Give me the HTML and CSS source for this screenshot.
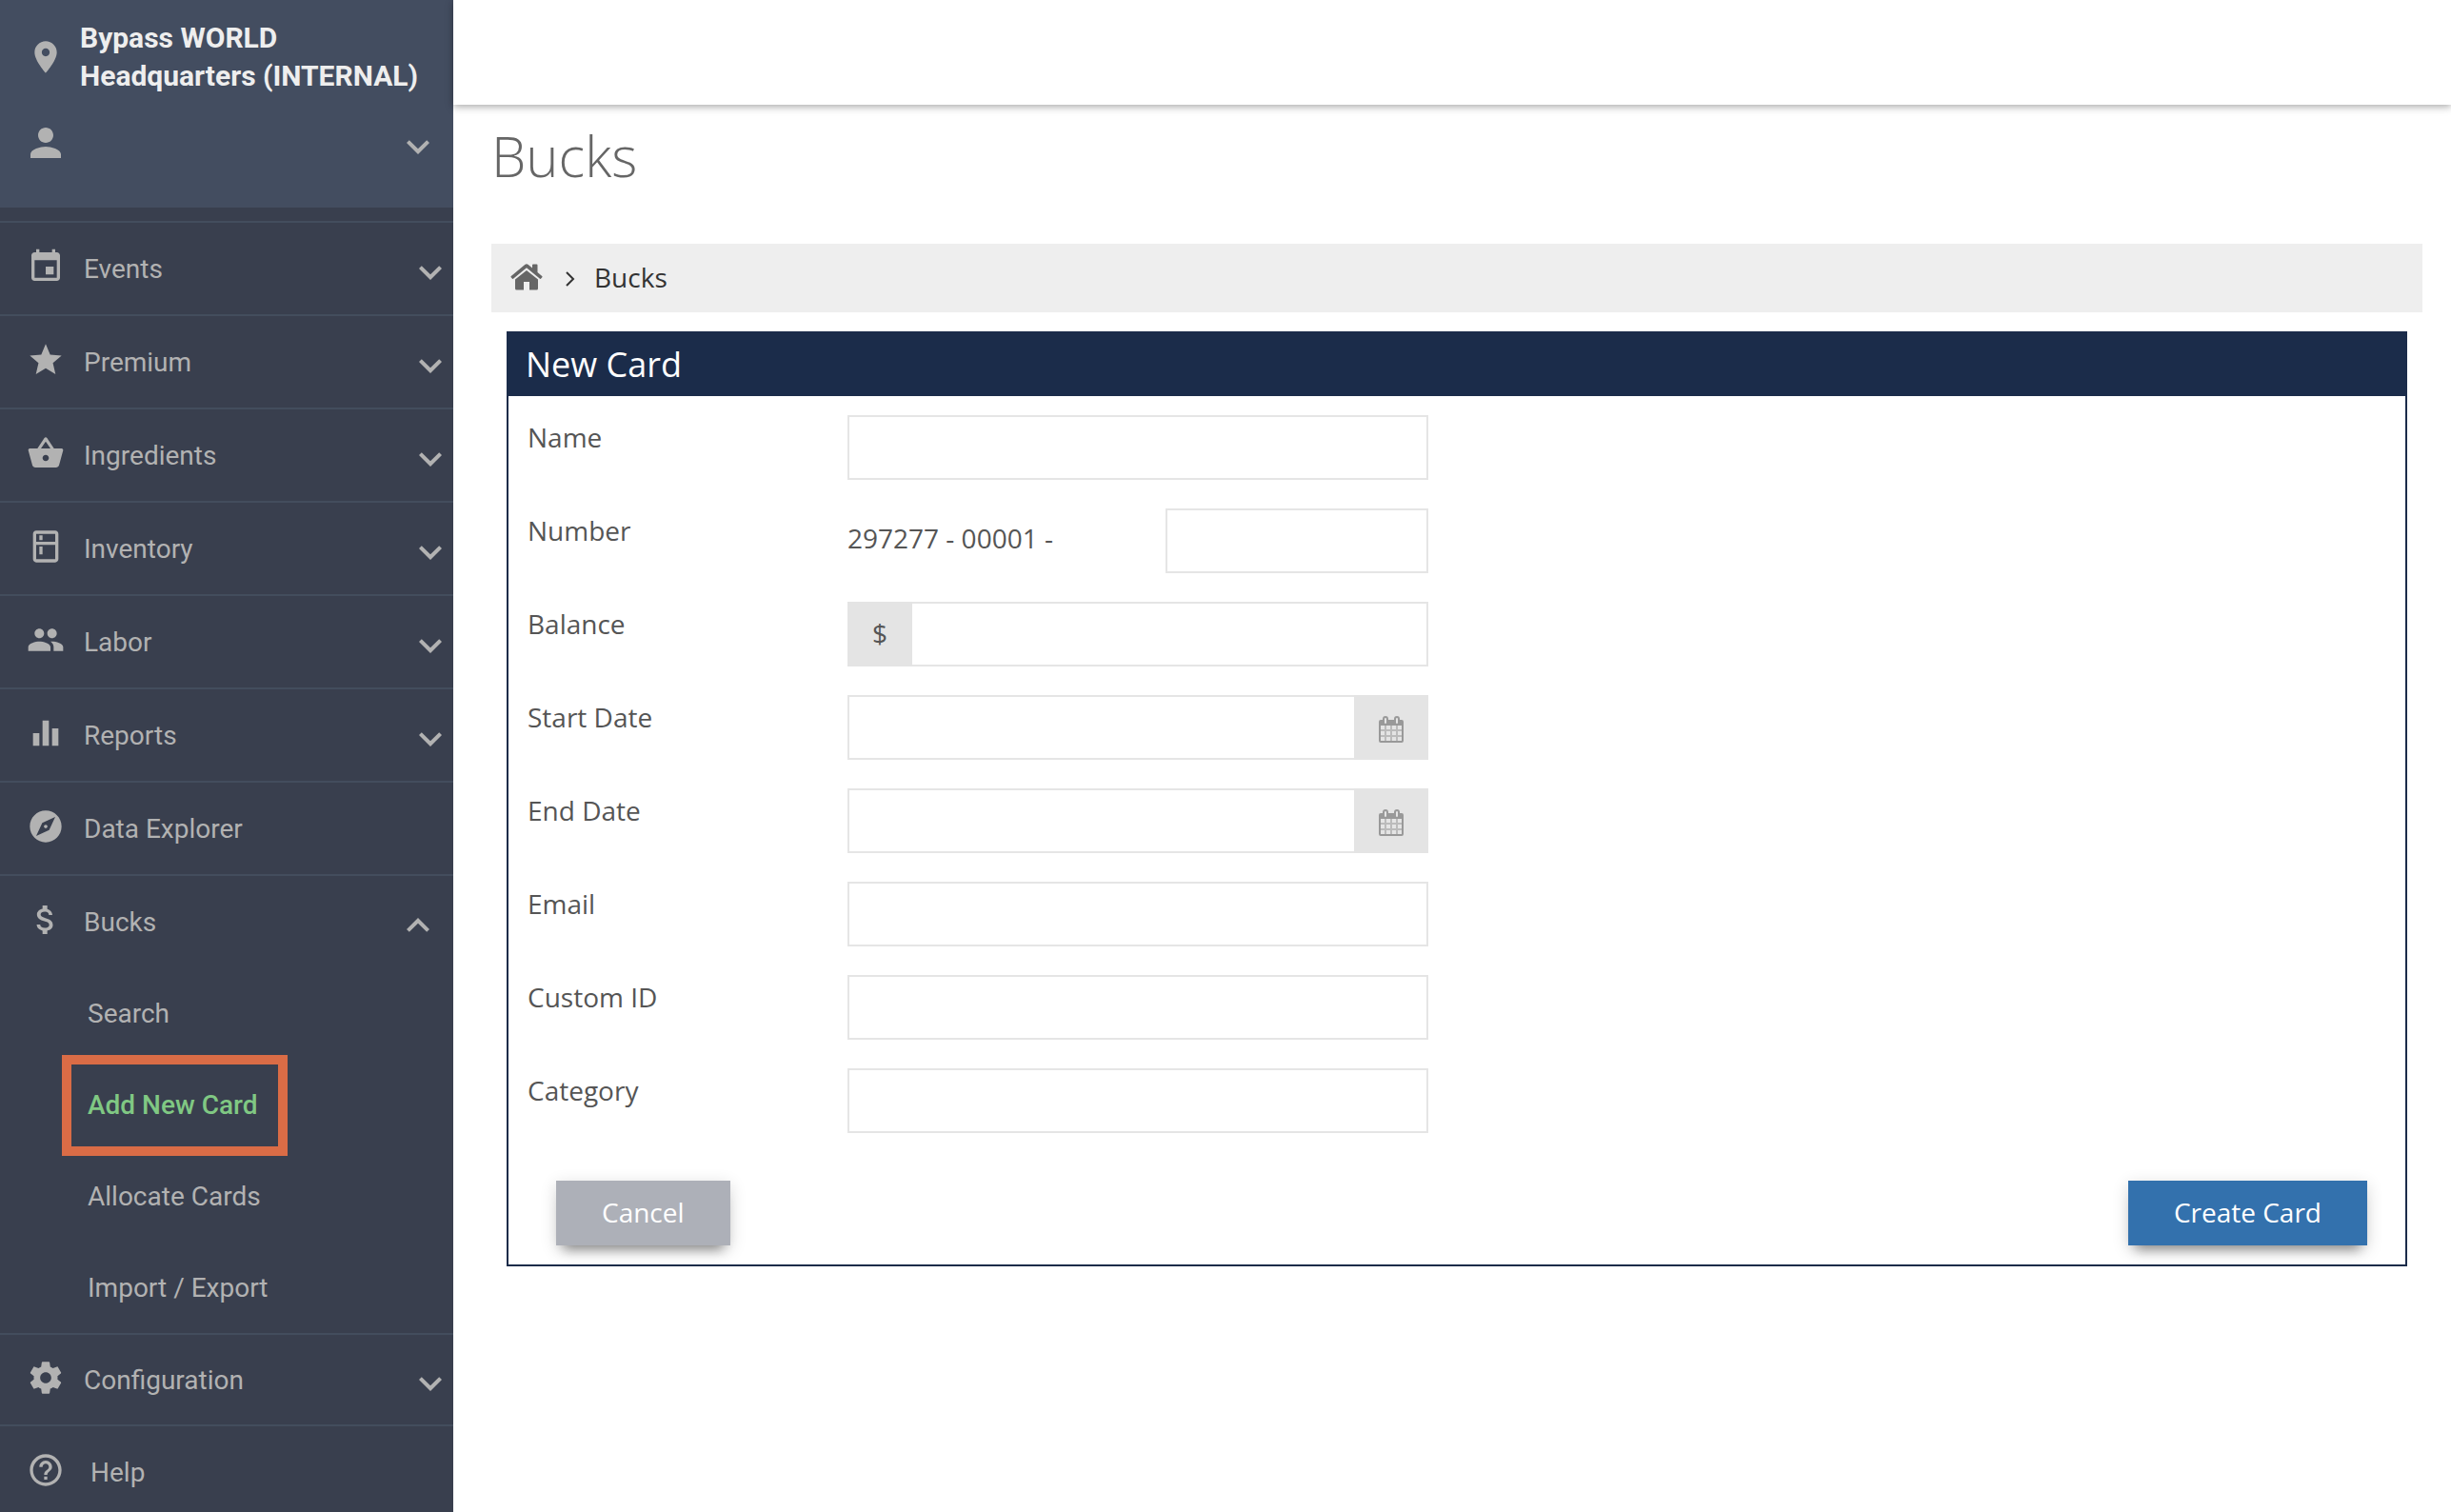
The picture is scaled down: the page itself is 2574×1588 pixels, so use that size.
FILE: index.html
```html
<!DOCTYPE html>
<html lang="en">
<head>
    <meta charset="UTF-8" />
    <meta name="viewport" content="width=device-width, initial-scale=1.0"/>
    <title>Bucks - New Card</title>
    <link rel="stylesheet" href="styles.css">
</head>
<body>
    <!-- Shared icons -->
    <svg class="icon-defs" aria-hidden="true">
        <symbol id="chevron-down" viewBox="0 0 24 24"><path d="M7.41 8.59L12 13.17l4.59-4.58L18 10l-6 6-6-6 1.41-1.41z"/></symbol>
        <symbol id="chevron-up" viewBox="0 0 24 24"><path d="M7.41 15.41L12 10.83l4.59 4.58L18 14l-6-6-6 6z"/></symbol>
        <symbol id="calendar" viewBox="0 0 26 28">
            <path fill-rule="evenodd" d="M2 4h2V3a3 3 0 0 1 6 0v1h6V3a3 3 0 0 1 6 0v1h2a2 2 0 0 1 2 2v20a2 2 0 0 1-2 2H2a2 2 0 0 1-2-2V6a2 2 0 0 1 2-2zM2 10v16h22V10zM6 3v4a1 1 0 0 0 2 0V3a1 1 0 0 0-2 0zM18 3v4a1 1 0 0 0 2 0V3a1 1 0 0 0-2 0z"/>
            <path opacity=".55" d="M6 10h2v16H6zM12 10h2v16h-2zM18 10h2v16h-2zM2 14h22v2H2zM2 20h22v2H2z"/>
        </symbol>
    </svg>

    <aside class="sidebar">
        <div class="account">
            <div class="account-row">
                <svg class="icon" viewBox="0 0 24 24"><path d="M12 2C8.13 2 5 5.13 5 9c0 5.25 7 13 7 13s7-7.75 7-13c0-3.87-3.13-7-7-7zm0 9.5c-1.38 0-2.5-1.12-2.5-2.5s1.12-2.5 2.5-2.5 2.5 1.12 2.5 2.5-1.12 2.5-2.5 2.5z"/></svg>
                <div class="venue">Bypass WORLD<br>Headquarters (INTERNAL)</div>
            </div>
            <button type="button" class="user-menu" aria-label="User menu">
                <svg class="icon-lg" viewBox="0 0 24 24"><path d="M12 12c2.21 0 4-1.79 4-4s-1.79-4-4-4-4 1.79-4 4 1.79 4 4 4zm0 2c-2.67 0-8 1.34-8 4v2h16v-2c0-2.66-5.33-4-8-4z"/></svg>
                <svg class="chevron inset"><use href="#chevron-down"/></svg>
            </button>
        </div>

        <nav class="nav">
            <a class="nav-item" href="#">
                <svg class="icon" viewBox="0 0 24 24"><path d="M17 12h-5v5h5v-5zM16 1v2H8V1H6v2H5c-1.11 0-1.99.9-1.99 2L3 19c0 1.1.89 2 2 2h14c1.1 0 2-.9 2-2V5c0-1.100-.9-2-2-2h-1V1h-2zm3 18H5V8h14v11z"/></svg>
                <span>Events</span>
                <svg class="chevron"><use href="#chevron-down"/></svg>
            </a>
            <a class="nav-item" href="#">
                <svg class="icon" viewBox="0 0 24 24"><path d="M12 17.27L18.18 21l-1.640-7.030L22 9.240l-7.190-.61L12 2 9.190 8.630 2 9.240l5.460 4.730L5.820 21z"/></svg>
                <span>Premium</span>
                <svg class="chevron"><use href="#chevron-down"/></svg>
            </a>
            <a class="nav-item" href="#">
                <svg class="icon" viewBox="0 0 24 24"><path d="M17.210 9l-4.380-6.560c-.19-.28-.51-.42-.83-.42-.32 0-.64.14-.83.430L6.790 9H2c-.55 0-1 .45-1 1 0 .09.010.18.040.27l2.540 9.270c.23.840 1 1.460 1.920 1.460h13c.920 0 1.690-.62 1.930-1.460l2.540-9.270L23 10c0-.55-.45-1-1-1h-4.790zM9 9l3-4.400L15 9H9zm3 8c-1.100 0-2-.9-2-2s.9-2 2-2 2 .9 2 2-.9 2-2 2z"/></svg>
                <span>Ingredients</span>
                <svg class="chevron"><use href="#chevron-down"/></svg>
            </a>
            <a class="nav-item" href="#">
                <svg class="icon" viewBox="0 0 24 24"><path d="M18 2.010L6 2c-1.100 0-2 .89-2 2v16c0 1.100.9 2 2 2h12c1.100 0 2-.9 2-2V4c0-1.110-.9-1.990-2-1.990zM18 20H6v-9.020h12V20zm0-11H6V4h12v5zM8 5h2v3H8zm0 7h2v5H8z"/></svg>
                <span>Inventory</span>
                <svg class="chevron"><use href="#chevron-down"/></svg>
            </a>
            <a class="nav-item" href="#">
                <svg class="icon" viewBox="0 0 24 24"><path d="M16 11c1.660 0 2.990-1.340 2.990-3S17.660 5 16 5c-1.660 0-3 1.340-3 3s1.340 3 3 3zm-8 0c1.660 0 2.990-1.340 2.990-3S9.660 5 8 5C6.340 5 5 6.340 5 8s1.340 3 3 3zm0 2c-2.330 0-7 1.170-7 3.500V19h14v-2.500c0-2.330-4.670-3.500-7-3.500zm8 0c-.29 0-.62.020-.97.050 1.160.84 1.970 1.970 1.970 3.450V19h6v-2.500c0-2.330-4.670-3.500-7-3.500z"/></svg>
                <span>Labor</span>
                <svg class="chevron"><use href="#chevron-down"/></svg>
            </a>
            <a class="nav-item" href="#">
                <svg class="icon" viewBox="0 0 24 24"><path d="M10 20h4V4h-4v16zm-6 0h4v-8H4v8zM16 9v11h4V9h-4z"/></svg>
                <span>Reports</span>
                <svg class="chevron"><use href="#chevron-down"/></svg>
            </a>
            <a class="nav-item" href="#">
                <svg class="icon" viewBox="0 0 24 24"><path d="M12 10.900c-.61 0-1.100.49-1.100 1.100s.49 1.100 1.100 1.100c.61 0 1.100-.49 1.100-1.100s-.49-1.100-1.100-1.100zM12 2C6.480 2 2 6.480 2 12s4.480 10 10 10 10-4.480 10-10S17.520 2 12 2zm2.190 12.190L6 18l3.810-8.190L18 6l-3.810 8.190z"/></svg>
                <span>Data Explorer</span>
            </a>
            <a class="nav-item" href="#">
                <svg class="icon" viewBox="0 0 24 24"><path d="M11.800 10.900c-2.270-.59-3-1.200-3-2.150 0-1.090 1.010-1.850 2.700-1.850 1.780 0 2.440.85 2.500 2.100h2.210c-.07-1.720-1.120-3.300-3.210-3.810V3h-3v2.160c-1.940.42-3.500 1.680-3.500 3.610 0 2.310 1.910 3.460 4.700 4.130 2.500.6 3 1.480 3 2.410 0 .69-.49 1.790-2.700 1.790-2.060 0-2.870-.92-2.980-2.100h-2.200c.12 2.190 1.760 3.420 3.680 3.830V21h3v-2.150c1.950-.37 3.500-1.500 3.500-3.550 0-2.840-2.430-3.810-4.700-4.400z"/></svg>
                <span>Bucks</span>
                <svg class="chevron inset"><use href="#chevron-up"/></svg>
            </a>
            <div class="subnav">
                <a href="#">Search</a>
                <a href="#" class="active">Add New Card</a>
                <a href="#">Allocate Cards</a>
                <a href="#">Import / Export</a>
            </div>
            <a class="nav-item" href="#">
                <svg class="icon" viewBox="0 0 24 24"><path d="M19.430 12.980c.04-.32.070-.64.070-.98s-.03-.66-.07-.98l2.110-1.650c.19-.15.24-.42.120-.64l-2-3.460c-.12-.22-.39-.3-.61-.22l-2.490 1c-.52-.4-1.080-.73-1.690-.98l-.38-2.650C14.460 2.180 14.250 2 14 2h-4c-.25 0-.46.180-.49.420l-.38 2.650c-.61.250-1.170.59-1.690.98l-2.490-1c-.23-.09-.49 0-.61.220l-2 3.460c-.13.220-.07.49.120.640l2.110 1.650c-.04.320-.07.650-.07.980s.030.660.070.980l-2.110 1.650c-.19.150-.24.420-.12.640l2 3.460c.12.220.39.300.61.220l2.490-1c.52.400 1.080.730 1.690.980l.38 2.650c.03.240.24.420.49.420h4c.25 0 .46-.18.490-.42l.38-2.650c.61-.25 1.170-.59 1.690-.98l2.490 1c.23.090.49 0 .61-.22l2-3.460c.12-.22.070-.49-.12-.64l-2.110-1.650zM12 15.500c-1.930 0-3.500-1.570-3.500-3.500s1.570-3.500 3.500-3.500 3.500 1.570 3.500 3.500-1.570 3.500-3.500 3.500z"/></svg>
                <span>Configuration</span>
                <svg class="chevron"><use href="#chevron-down"/></svg>
            </a>
            <a class="nav-item help" href="#">
                <svg class="icon" viewBox="0 0 24 24"><path d="M11 18h2v-2h-2v2zm1-16C6.480 2 2 6.480 2 12s4.480 10 10 10 10-4.480 10-10S17.520 2 12 2zm0 18c-4.410 0-8-3.590-8-8s3.590-8 8-8 8 3.590 8 8-3.590 8-8 8zm0-14c-2.210 0-4 1.790-4 4h2c0-1.100.9-2 2-2s2 .9 2 2c0 2-3 1.750-3 5h2c0-2.250 3-2.500 3-5 0-2.210-1.790-4-4-4z"/></svg>
                <span>Help</span>
            </a>
        </nav>
    </aside>

    <div class="page">
        <header class="topbar"></header>

        <main class="content">
            <h1>Bucks</h1>

            <nav class="breadcrumb" aria-label="Breadcrumb">
                <a href="#" aria-label="Home">
                    <svg class="home" viewBox="0 0 34 28">
                        <path d="M17 7L5 16.500V26a1.500 1.500 0 0 0 1.500 1.500H14V19h6v8.500h7.500A1.500 1.500 0 0 0 29 26v-9.500z"/>
                        <path d="M28.500 9V1.500a1 1 0 0 0-1-1H24a1 1 0 0 0-1 1v3L18.800 1.100a2.800 2.800 0 0 0-3.600 0L.8 13a.9.9 0 0 0-.1 1.200l1.100 1.400a.9.9 0 0 0 1.200.1L17 4.200l14 11.500a.9.900 0 0 0 1.200-.1l1.100-1.400a.9.900 0 0 0-.1-1.200z"/>
                    </svg>
                </a>
                <svg class="separator" viewBox="0 0 10 16"><path d="M1 1l7 7-7 7"/></svg>
                <span>Bucks</span>
            </nav>

            <section class="panel">
                <h2>New Card</h2>
                <form>
                    <div class="form-row">
                        <label for="name">Name</label>
                        <div class="control"><input type="text" id="name"></div>
                    </div>
                    <div class="form-row">
                        <label for="number">Number</label>
                        <div class="control">
                            <span class="prefix">297277 - 00001 -</span>
                            <input type="text" id="number" class="short">
                        </div>
                    </div>
                    <div class="form-row">
                        <label for="balance">Balance</label>
                        <div class="control">
                            <span class="addon currency">$</span>
                            <input type="text" id="balance">
                        </div>
                    </div>
                    <div class="form-row">
                        <label for="startDate">Start Date</label>
                        <div class="control">
                            <input type="text" id="startDate" class="date">
                            <button type="button" class="addon picker" aria-label="Pick start date"><svg><use href="#calendar"/></svg></button>
                        </div>
                    </div>
                    <div class="form-row">
                        <label for="endDate">End Date</label>
                        <div class="control">
                            <input type="text" id="endDate" class="date">
                            <button type="button" class="addon picker" aria-label="Pick end date"><svg><use href="#calendar"/></svg></button>
                        </div>
                    </div>
                    <div class="form-row">
                        <label for="email">Email</label>
                        <div class="control"><input type="email" id="email"></div>
                    </div>
                    <div class="form-row">
                        <label for="customId">Custom ID</label>
                        <div class="control"><input type="text" id="customId"></div>
                    </div>
                    <div class="form-row">
                        <label for="category">Category</label>
                        <div class="control"><input type="text" id="category"></div>
                    </div>

                    <div class="actions">
                        <button type="button" class="btn btn-cancel">Cancel</button>
                        <button type="submit" class="btn btn-create">Create Card</button>
                    </div>
                </form>
            </section>
        </main>
    </div>
</body>
</html>
```

FILE: styles.css
```css
*,
*::before {
    margin: 0;
    padding: 0;
    box-sizing: border-box;
}

body {
    height: 100vh;
    display: flex;
    overflow: hidden;
    background: #ffffff;
    font-family: 'Open Sans', sans-serif;
    font-size: 28px;
    color: #555555;
}

a {
    color: inherit;
    text-decoration: none;
}

button,
input {
    font: inherit;
    color: inherit;
    border: none;
}

button {
    cursor: pointer;
}

svg {
    flex: none;
    display: block;
    fill: currentColor;
}

.icon-defs {
    position: absolute;
    width: 0;
    height: 0;
}

/* Sidebar */
.sidebar {
    flex: none;
    width: 476px;
    overflow: hidden;
    background: #393f4e;
    color: #b2b2b2;
    font-family: Roboto, sans-serif;
}

.account {
    height: 218px;
    padding-top: 20px;
    margin-bottom: 14px;
    background: #434d60;
}

.account-row {
    display: flex;
    align-items: center;
    gap: 16px;
    padding-left: 28px;
}

.venue {
    color: #eeeeee;
    font-size: 30px;
    font-weight: 700;
    line-height: 40px;
    white-space: nowrap;
}

.user-menu {
    display: flex;
    align-items: center;
    width: 100%;
    height: 100px;
    padding-left: 24px;
    background: none;
}

.icon {
    width: 40px;
    height: 40px;
}

.icon-lg {
    width: 48px;
    height: 48px;
}

.chevron {
    width: 48px;
    height: 48px;
    margin-left: auto;
    margin-top: 8px;
}

.chevron.inset {
    margin-right: 13px;
}

.nav-item {
    display: flex;
    align-items: center;
    gap: 20px;
    height: 98px;
    padding-left: 28px;
    border-top: 2px solid #434d5d;
}

.nav-item .icon {
    margin-bottom: 4px;
}

.subnav + .nav-item {
    height: 96px;
}

.nav-item.help {
    gap: 27px;
}

.subnav a {
    display: block;
    position: relative;
    height: 96px;
    padding-left: 92px;
    line-height: 98px;
}

.subnav .active {
    color: #80c883;
    font-weight: 500;
}

.subnav .active::before {
    content: '';
    position: absolute;
    top: -4px;
    bottom: -6px;
    left: 65px;
    width: 237px;
    border: 10px solid #da6c46;
}

/* Page */
.page {
    flex: 1;
    min-width: 0;
}

.topbar {
    position: relative;
    height: 110px;
    background: #ffffff;
    box-shadow: 0 2px 8px rgba(0, 0, 0, 0.35);
}

.content {
    padding: 0 30px 0 40px;
}

h1 {
    padding-top: 14px;
    margin-bottom: 52px;
    color: #666666;
    font-size: 58px;
    font-weight: 300;
    line-height: 80px;
}

.breadcrumb {
    display: flex;
    align-items: center;
    height: 72px;
    padding: 0 20px 2px;
    margin-bottom: 20px;
    background: #eeeeee;
    color: #333333;
}

.home {
    width: 34px;
    height: 28px;
    color: #666666;
}

.separator {
    width: 10px;
    height: 16px;
    margin: 4px 20px 0 24px;
    fill: none;
    stroke: currentColor;
    stroke-width: 2;
}

/* Form panel */
.panel {
    margin: 0 16px;
    border: 2px solid #1b2c4a;
}

.panel h2 {
    padding: 0 18px;
    background: #1b2c4a;
    color: #ffffff;
    font-size: 36px;
    font-weight: 400;
    line-height: 66px;
}

.panel form {
    padding: 20px;
}

.form-row {
    display: grid;
    grid-template-columns: 336px minmax(0, 610px);
    margin-bottom: 30px;
}

.form-row label {
    line-height: 46px;
}

.control {
    display: flex;
    height: 68px;
}

.control input {
    flex: 1;
    min-width: 0;
    padding: 0 16px;
    border: 2px solid #e5e5e5;
    background: #ffffff;
    outline: none;
}

.control input:focus {
    border-color: #3371ad;
}

.control .short {
    flex: none;
    width: 276px;
}

.control .date {
    border-right: none;
}

.prefix {
    flex: 1;
    line-height: 62px;
}

.addon {
    display: flex;
    align-items: center;
    justify-content: center;
    background: #e4e4e4;
}

.currency {
    width: 68px;
    padding-bottom: 2px;
}

.currency + input {
    border-left: none;
}

.picker {
    width: 78px;
    padding-top: 4px;
    color: #999999;
}

.picker svg {
    width: 26px;
    height: 28px;
}

.actions {
    display: flex;
    justify-content: space-between;
    padding: 20px 20px 0 30px;
}

.btn {
    height: 68px;
    padding: 0 48px 2px;
    color: #ffffff;
    box-shadow: 0 12px 12px -8px rgba(0, 0, 0, 0.4), 0 4px 16px rgba(0, 0, 0, 0.16);
}

.btn-cancel {
    background: #adb0b8;
}

.btn-create {
    background: #3371ad;
}
```
